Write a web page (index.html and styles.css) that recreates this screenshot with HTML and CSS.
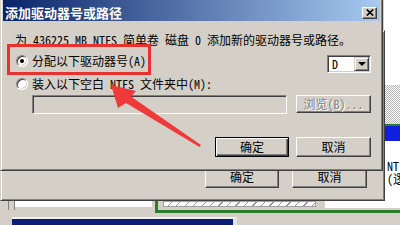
FILE: index.html
```html
<!DOCTYPE html>
<html lang="zh-CN">
<head>
<meta charset="utf-8">
<title>添加驱动器号或路径</title>
<link rel="stylesheet" href="styles.css">
</head>
<body>
<div class="screen">
  <div class="desk">
    <div class="desk-top">
      <div class="desk-fill"></div>
      <div class="vol">
        <div class="vol-white"></div>
        <div class="vol-check"></div>
        <div class="vol-green"></div>
        <div class="vol-blue"></div>
        <div class="vol-body"><div>NTFS</div><div>(逻辑驱动器)</div></div>
      </div>
    </div>
    <div class="disk-row">
      <div class="dr-a"></div>
      <div class="dr-b"></div>
      <div class="dr-white"></div>
      <div class="dr-gap"></div>
      <div class="dr-green"></div>
      <div class="dr-part"><div class="dr-hatch"></div></div>
      <div class="dr-white2"></div>
    </div>
    <div class="green-row"><div class="gr-a"></div><div class="gr-line"></div></div>
    <div class="bot-row"><div class="navy"></div></div>
  </div>

  <div class="win back">
    <div class="row back-btns"><span class="btn back-btn">确定</span><span class="btn back-btn">取消</span></div>
  </div>

  <div class="win front">
    <div class="titlebar">
      <span class="title">添加驱动器号或路径</span>
      <span class="close"><svg width="8" height="7" viewBox="0 0 8 7"><path d="M0.8 0.5 L7.2 6.5 M7.2 0.5 L0.8 6.5" stroke="#000" stroke-width="1.7" fill="none"/></svg></span>
    </div>
    <div class="body">
      <p class="msg">为 436225 MB NTFS 简单卷 磁盘 0 添加新的驱动器号或路径。</p>
      <div class="row row1">
        <span class="opt"><span class="radio on"></span><span class="lbl">分配以下驱动器号(A)</span></span>
        <span class="combo"><span class="combo-val">D</span><span class="combo-btn"><i class="tri"></i></span></span>
      </div>
      <div class="row row2">
        <span class="opt"><span class="radio"></span><span class="lbl">装入以下空白 NTFS 文件夹中(M):</span></span>
      </div>
      <div class="row row3">
        <span class="field"></span>
        <span class="btn browse">浏览(B)...</span>
      </div>
      <div class="row row4">
        <span class="btn default">确定</span>
        <span class="btn cancel">取消</span>
      </div>
    </div>
  </div>

  <div class="redbox"></div>
  <svg class="arrow" width="400" height="225" viewBox="0 0 400 225">
    <polygon points="111,85 136,91 131,96.5 201,145 199.5,147 126,103 118,108" fill="#ee3a3a"/>
  </svg>
</div>
</body>
</html>
```

FILE: styles.css
```css
* { box-sizing: border-box; margin: 0; padding: 0; }
html, body { width: 400px; height: 225px; overflow: hidden; }
body {
  font-family: "Noto Sans Mono CJK SC", "Noto Sans CJK SC", sans-serif;
  font-size: 12px;
  color: #000;
  background: #d4d0c8;
}
.screen { position: relative; width: 400px; height: 225px; overflow: hidden; background: #d4d0c8; }

/* background: disk management window */
.desk { display: flex; flex-direction: column; height: 225px; }
.desk-top { display: flex; height: 200px; }
.desk-fill { flex: 1; }
.vol { width: 16px; display: flex; flex-direction: column; }
.vol-white { height: 85px; background: #fff; }
.vol-check { height: 39px; background: repeating-conic-gradient(#b4b4b4 0 25%, #fff 0 50%) 0 0 / 2px 2px; }
.vol-green { height: 2px; background: #2a7d2a; }
.vol-blue { height: 15px; background: #1020e0; }
.vol-body { flex: 1; background: #fff; padding: 18px 0 0 3px; white-space: nowrap; line-height: 13px; }

.disk-row { display: flex; height: 10px; }
.dr-a { width: 9px; border-right: 1px solid #808080; }
.dr-b { width: 6px; border-right: 1px solid #808080; }
.dr-white { width: 137px; height: 7px; background: #fff; }
.dr-gap { width: 3px; }
.dr-green { width: 3px; background: #2a7d2a; }
.dr-part { width: 167px; padding: 1px 9px 0 5px; }
.dr-hatch {
  height: 6px;
  border: 1px solid #a0a0a0;
  background: repeating-linear-gradient(135deg, #fff 0 5px, #909090 5px 6px);
}
.dr-white2 { flex: 1; height: 8px; background: #fff; }

.green-row { display: flex; height: 3px; }
.gr-a { width: 155px; }
.gr-line { flex: 1; background: #2a7d2a; }

.bot-row { height: 12px; padding: 4px 0 0 12px; }
.navy { width: 225px; height: 8px; background: #0c1e74; border-top: 2px solid #f0f0f0; border-right: 4px solid #e4e4e4; }

/* windows */
.win {
  position: absolute;
  background: #d4d0c8;
  border: 1px solid;
  border-color: #d4d0c8 #404040 #404040 #d4d0c8;
  box-shadow: inset 1px 1px #fff, inset -1px -1px #808080;
  padding: 2px;
}
.front { left: 0; top: -3px; width: 383px; height: 174px; display: flex; flex-direction: column; }
.back { left: 0; top: 30px; width: 385px; height: 171px; display: flex; flex-direction: column; justify-content: flex-end; }

.titlebar {
  height: 21px;
  padding: 4px 3px 0 2px;
  display: flex;
  align-items: center;
  justify-content: space-between;
  background: linear-gradient(90deg, #0a246a, #a6caf0);
}
.title { color: #fff; font-family: "Noto Sans CJK SC", sans-serif; font-weight: bold; font-size: 13px; line-height: 15px; }
.close {
  width: 15px; height: 12px;
  display: flex; align-items: center; justify-content: center;
  background: #d4d0c8;
  border: 1px solid; border-color: #fff #404040 #404040 #fff;
  box-shadow: inset -1px -1px #808080;
}
.close svg { display: block; }

.body { flex: 1; padding: 12px 9px 0 12px; }
.msg { line-height: 14px; height: 14px; white-space: nowrap; }
.row { display: flex; }
.row1 { margin-top: 6px; align-items: flex-start; }
.row2 { margin-top: 3px; }
.row3 { margin-top: 3px; padding-left: 17px; }
.row4 { margin-top: 23px; justify-content: flex-end; gap: 7px; }

.opt { display: flex; align-items: center; height: 16px; margin-left: 1px; gap: 4px; white-space: nowrap; }
.lbl { line-height: 14px; }
.radio {
  position: relative;
  flex: none;
  width: 12px; height: 12px;
  border-radius: 50%;
  background: #fff;
  border: 1px solid; border-color: #808080 #fff #fff #808080;
  box-shadow: inset 1px 1px #404040, inset -1px -1px #d4d0c8;
}
.radio.on::after {
  content: "";
  position: absolute; left: 3px; top: 3px;
  width: 4px; height: 4px; border-radius: 50%;
  background: #000;
}

.combo {
  margin-left: auto; margin-top: 2px;
  width: 44px; height: 18px;
  display: flex;
  background: #fff;
  border: 1px solid; border-color: #808080 #fff #fff #808080;
  box-shadow: inset 1px 1px #404040, inset -1px -1px #d4d0c8;
  padding: 1px;
}
.combo-val { flex: 1; padding-left: 3px; line-height: 14px; }
.combo-btn {
  width: 15px;
  display: flex; align-items: center; justify-content: center;
  background: #d4d0c8;
  border: 1px solid; border-color: #d4d0c8 #404040 #404040 #d4d0c8;
  box-shadow: inset 1px 1px #fff, inset -1px -1px #808080;
}
.tri { display: block; width: 0; height: 0; border-top: 4px solid #000; border-left: 4px solid transparent; border-right: 4px solid transparent; }

.field {
  width: 255px; height: 19px;
  background: #d4d0c8;
  border: 1px solid; border-color: #808080 #fff #fff #808080;
  box-shadow: inset 1px 1px #404040, inset -1px -1px #d4d0c8;
}

.btn {
  display: flex; align-items: center; justify-content: center;
  height: 20px;
  background: #d4d0c8;
  border: 1px solid; border-color: #fff #404040 #404040 #fff;
  box-shadow: inset -1px -1px #808080;
  line-height: 14px;
  white-space: nowrap;
}
.btn.default {
  width: 74px;
  border-color: #000;
  box-shadow: inset 1px 1px #fff, inset -1px -1px #404040, inset -2px -2px #808080;
}
.btn.cancel { width: 75px; }
.browse { margin-left: 9px; width: 75px; height: 18px; color: #808080; text-shadow: 1px 1px 0 #fff; }

.back-btns { justify-content: flex-end; gap: 13px; padding: 0 15px 10px 0; }
.back-btn { height: 22px; }
.back-btn:first-child { width: 74px; }
.back-btn:last-child { width: 75px; }

/* annotations overlaid on the screenshot */
.redbox { position: absolute; left: 7px; top: 44px; width: 144px; height: 31px; border: 3px solid #e8322f; }
.arrow { position: absolute; left: 0; top: 0; pointer-events: none; }
```
